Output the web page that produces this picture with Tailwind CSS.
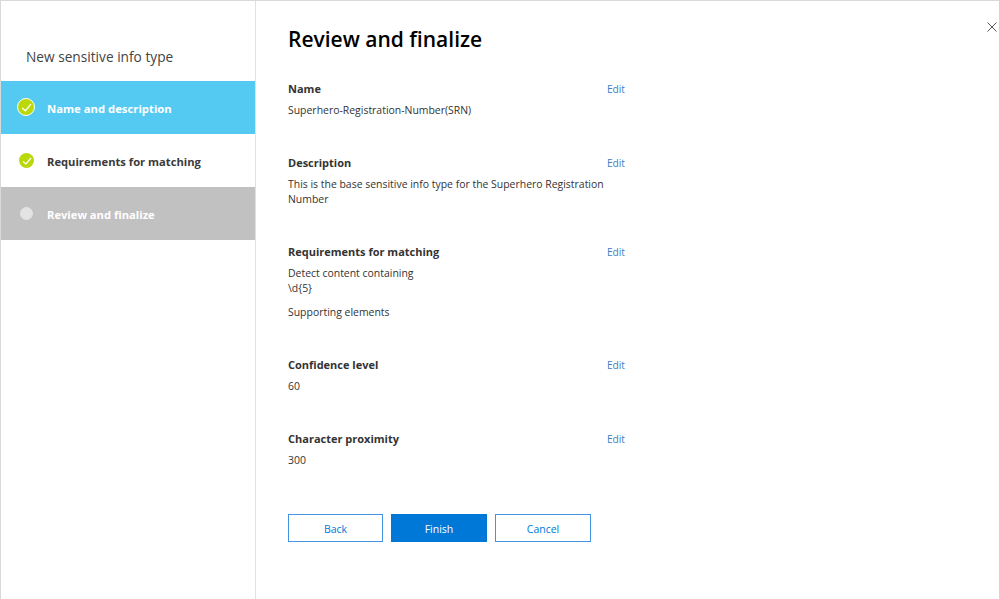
<!DOCTYPE html>
<html lang="en">
<head>
  <meta charset="UTF-8">
  <title>New sensitive info type</title>
  <script src="https://cdn.jsdelivr.net/npm/@tailwindcss/browser@4"></script>
</head>
<body class="bg-white overflow-hidden font-['Open_Sans',sans-serif]">
  <div class="relative flex h-[599px] w-[999px] border-t border-l border-[#d9d9d9] text-[#333]">
    <!-- left nav -->
    <aside class="w-[255px] shrink-0 border-r border-[#e1e1e1]">
      <h2 class="pl-[25px] pt-[46px] h-[80px] text-[13.7px] leading-[20px] text-[#444]">New sensitive info type</h2>
      <div class="flex h-[53px] items-center bg-[#54caf3] text-white">
        <span class="ml-[16px] mb-[1px] flex h-[18px] w-[18px] items-center justify-center rounded-full border border-white bg-[#bad80a]">
          <svg class="w-[11px] h-[11px]" viewBox="0 0 10 10" fill="none" stroke="white" stroke-width="1.2"><path d="M1 5.5 L4 8 L9 2"/></svg>
        </span>
        <span class="ml-[12px] pt-[3px] text-[11.3px] font-bold">Name and description</span>
      </div>
      <div class="flex h-[53px] items-center">
        <span class="ml-[18px] flex h-[15px] w-[15px] items-center justify-center rounded-full bg-[#bad80a]">
          <svg class="w-[10px] h-[10px]" viewBox="0 0 10 10" fill="none" stroke="white" stroke-width="1.2"><path d="M1 5.5 L4 8 L9 2"/></svg>
        </span>
        <span class="ml-[13px] pt-[4px] text-[11.2px] font-bold text-[#3b3a39]">Requirements for matching</span>
      </div>
      <div class="flex h-[53px] items-center bg-[#c1c1c1] text-white">
        <span class="ml-[19px] h-[13px] w-[13px] rounded-full bg-[#e3e3e3]"></span>
        <span class="ml-[14px] pt-[4px] text-[11.2px] font-bold">Review and finalize</span>
      </div>
    </aside>

    <!-- main panel -->
    <main class="w-[369px] pl-[32px] text-[10.45px] leading-[15px]">
      <h1 class="mt-[22px] h-[33px] text-[21px] leading-[33px] font-semibold text-black">Review and finalize</h1>

      <section class="mt-[26px] h-[74px]">
        <div class="flex justify-between h-[15px]"><h3 class="text-[11px] leading-[13px] font-bold">Name</h3><a class="text-[10.2px] text-[#3a7fc4]">Edit</a></div>
        <p class="mt-[6px]">Superhero-Registration-Number(SRN)</p>
      </section>
      <section class="h-[89px]">
        <div class="flex justify-between h-[15px]"><h3 class="text-[11px] leading-[13px] font-bold">Description</h3><a class="text-[10.2px] text-[#3a7fc4]">Edit</a></div>
        <p class="mt-[6px] w-[320px]">This is the base sensitive info type for the Superhero Registration Number</p>
      </section>
      <section class="h-[113px]">
        <div class="flex justify-between h-[15px]"><h3 class="text-[11px] leading-[13px] font-bold">Requirements for matching</h3><a class="text-[10.2px] text-[#3a7fc4]">Edit</a></div>
        <p class="mt-[6px]">Detect content containing</p>
        <p>\d{5}</p>
        <p class="mt-[9px]">Supporting elements</p>
      </section>
      <section class="h-[74px]">
        <div class="flex justify-between h-[15px]"><h3 class="text-[11px] leading-[13px] font-bold">Confidence level</h3><a class="text-[10.2px] text-[#3a7fc4]">Edit</a></div>
        <p class="mt-[6px]">60</p>
      </section>
      <section class="h-[82px]">
        <div class="flex justify-between h-[15px]"><h3 class="text-[11px] leading-[13px] font-bold">Character proximity</h3><a class="text-[10.2px] text-[#3a7fc4]">Edit</a></div>
        <p class="mt-[6px]">300</p>
      </section>

      <div class="flex gap-[8px] text-[10.5px]">
        <button class="h-[28px] w-[95px] pt-[2px] border border-[#3f96de] text-[#0078d7]">Back</button>
        <button class="h-[28px] w-[96px] pt-[2px] border border-[#0078d7] bg-[#0078d7] text-white">Finish</button>
        <button class="h-[28px] w-[96px] pt-[2px] border border-[#3f96de] text-[#0078d7]">Cancel</button>
      </div>
    </main>

    <!-- close -->
    <svg class="absolute right-[2px] top-[21px] w-[10px] h-[10px]" viewBox="0 0 10 10" fill="none" stroke="#555" stroke-width="1"><path d="M0.5 0.5 L9.5 9.5 M9.5 0.5 L0.5 9.5"/></svg>
  </div>
</body>
</html>
